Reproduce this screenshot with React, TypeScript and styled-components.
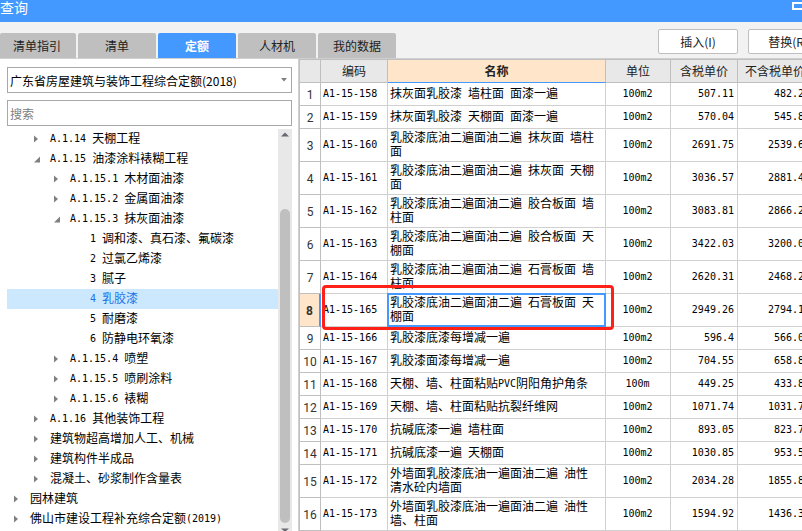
import React, { useState } from 'react';
import styled, { createGlobalStyle, css } from 'styled-components';

const CJK = `'Noto Sans CJK SC', sans-serif`;
const BLUE = '#4399ff';
const LINE = '#d0d0d0';
const EDGE = '#bfbfbf';

const GlobalStyle = createGlobalStyle`
  * { box-sizing: border-box; }
  body { margin: 0; overflow: hidden; }
  body, button, input, select, table { font-family: ${CJK}; font-size: 12px; color: #000; }
`;

const Window = styled.div`
  display: flex;
  flex-direction: column;
  height: 100vh;
  overflow: hidden;
  background: #fff;
`;

const TitleBar = styled.header`
  display: flex;
  flex: none;
  justify-content: space-between;
  align-items: flex-start;
  height: 22px;
  background: ${BLUE};
  color: #fff;
`;

const Title = styled.h1`
  margin: 0;
  font-size: 14px;
  line-height: 15px;
  font-weight: 400;
`;

const WindowButton = styled.button`
  width: 10px;
  height: 12px;
  padding: 0;
  border: 0;
  background: none;
  svg { display: block; }
`;

const Toolbar = styled.div`
  display: flex;
  flex: none;
  align-items: flex-end;
  height: 37px;
  background: #f2f2f2;
  border-bottom: 1px solid ${LINE};
  overflow: hidden;
`;

const Tabs = styled.nav`
  display: flex;
  gap: 2px;
`;

const Tab = styled.button<{ $active: boolean }>`
  width: 78px;
  height: 25px;
  padding: 0;
  border: 0;
  border-radius: 2px 2px 0 0;
  background: ${p => (p.$active ? BLUE : EDGE)};
  color: ${p => (p.$active ? '#fff' : '#222')};
  font-weight: ${p => (p.$active ? 700 : 400)};
  line-height: 24px;
  &:first-child { width: 76px; padding-right: 2px; }
`;

const Actions = styled.div`
  display: flex;
  gap: 10px;
  align-self: flex-start;
  margin: 7px -26px 0 auto;
`;

const ActionButton = styled.button`
  width: 80px;
  height: 25px;
  padding: 0;
  border: 1px solid ${EDGE};
  border-radius: 2px;
  background: #fff;
  color: #222;
  line-height: 23px;
  white-space: nowrap;
`;

const Body = styled.main`
  display: flex;
  flex: 1;
  min-height: 0;
`;

const Sidebar = styled.aside`
  display: flex;
  flex-direction: column;
  flex: none;
  width: 299px;
  padding: 8px 6px 0 7px;
  border-right: 1px solid ${LINE};
`;

const fieldStyle = css`
  display: block;
  width: 100%;
  height: 26px;
  padding: 0 2px;
  border: 1px solid #a8a8a8;
  border-radius: 0;
  background: #fff;
  outline: none;
`;

const SelectWrap = styled.label`
  display: grid;
  grid-template-columns: 1fr 12px;
  align-items: center;
  margin-bottom: 7px;
  > * { grid-row: 1; }
  > select { grid-column: 1 / 3; }
  > svg { grid-column: 2; pointer-events: none; z-index: 1; }
`;

const LibrarySelect = styled.select`
  ${fieldStyle}
  appearance: none;
`;

const SearchBox = styled.input`
  ${fieldStyle}
  flex: none;
  &::placeholder { color: #808080; opacity: 1; }
`;

const TreeArea = styled.div`
  display: flex;
  flex: 1;
  min-height: 0;
  margin-top: 3px;
  overflow: hidden;
`;

const Tree = styled.ul`
  flex: 1;
  margin: 0;
  padding: 0;
  list-style: none;
`;

const TreeRow = styled.li<{ $level: number; $selected: boolean }>`
  display: flex;
  align-items: center;
  height: 20px;
  padding-left: ${p => p.$level * 20 + 6}px;
  background: ${p => (p.$selected ? '#cce8ff' : 'transparent')};
`;

const NodeButton = styled.button<{ $selected: boolean }>`
  display: flex;
  align-items: center;
  height: 20px;
  padding: 0;
  border: 0;
  background: none;
  white-space: pre;
  color: ${p => (p.$selected ? '#1a73e8' : '#000')};
`;

const NodeLabel = styled.span`
  height: 20px;
  line-height: 18px;
`;

const Marker = styled.span`
  display: block;
  width: 17px;
  height: 8px;
  svg { display: block; }
`;

const Mono = styled.span`
  font-family: 'DejaVu Sans Mono', monospace;
  font-size: 10px;
  line-height: 1;
  vertical-align: 1px;
  white-space: pre-wrap;
`;

const ScrollTrack = styled.div`
  display: flex;
  flex-direction: column;
  align-items: center;
  flex: none;
  width: 14px;
  padding-top: 3px;
  background: #e8e8e8;
`;

const ScrollThumb = styled.div`
  flex: 1;
  width: 10px;
  margin: 72px 0 5px;
  border-radius: 5px;
  background: ${EDGE};
`;

const GridPane = styled.section`
  flex: 1;
  min-width: 0;
  overflow: hidden;
  border-left: 1px solid ${EDGE};
  border-top: 1px solid ${EDGE};
`;

const Grid = styled.table`
  width: calc(100% + 11px);
  table-layout: fixed;
  border-collapse: separate;
  border-spacing: 0;
`;

const Col = styled.col<{ $width?: number }>`
  width: ${p => (p.$width ? `${p.$width}px` : 'auto')};
`;

const HeadCell = styled.th<{ $active?: boolean }>`
  height: 23px;
  padding: 0;
  border-right: 1px solid ${EDGE};
  border-bottom: 1px solid ${p => (p.$active ? BLUE : EDGE)};
  background: ${p => (p.$active ? '#ffe6cb' : '#e8e8e8')};
  color: #222;
  font-weight: ${p => (p.$active ? 700 : 400)};
  line-height: 18px;
  white-space: nowrap;
`;

const GridRow = styled.tr<{ $tall: boolean }>`
  height: ${p => (p.$tall ? 33 : 23)}px;
`;

const RowNumber = styled.th<{ $active: boolean }>`
  padding: 2px 0 0;
  border-right: 1px solid ${EDGE};
  border-bottom: 1px solid ${EDGE};
  font-family: Roboto, sans-serif;
  font-size: 12px;
  line-height: 14px;
  font-weight: ${p => (p.$active ? 700 : 400)};
  color: #333;
  ${p => p.$active && css`
    background: #ffe6cb;
    border-right: 2px solid ${BLUE};
  `}
`;

const Cell = styled.td<{ $align?: string }>`
  padding: 0 3px 2px 2px;
  border-right: 1px solid ${LINE};
  border-bottom: 1px solid ${LINE};
  line-height: 14px;
  text-align: ${p => p.$align || 'left'};
`;

const ClippedCell = styled(Cell)`
  padding-right: 8px;
  text-align: right;
`;

const NameCell = styled(Cell)`
  position: relative;
`;

const FocusFrame = styled.span`
  position: absolute;
  inset: -1px;
  border: 2px solid ${BLUE};
  pointer-events: none;
`;

const CalloutFrame = styled.span`
  position: absolute;
  inset: -9px -9px -4px -66px;
  border: 3px solid #ff2018;
  border-radius: 4px;
  pointer-events: none;
  z-index: 2;
`;

/** Sets half-width characters in the fixed-pitch face beside full-width text. */
function Mixed({ text }: { text: string }) {
  return (
    <>
      {text.split(/([\x20-\x7e]+)/).filter(Boolean).map((part, i) =>
        /^[\x20-\x7e]/.test(part) ? <Mono key={i}>{part}</Mono> : part
      )}
    </>
  );
}

type Node = { label: string; level: number; state: 'open' | 'closed' | 'leaf' };

const nodes: Node[] = [
  { label: 'A.1.14 天棚工程', level: 1, state: 'closed' },
  { label: 'A.1.15 油漆涂料裱糊工程', level: 1, state: 'open' },
  { label: 'A.1.15.1 木材面油漆', level: 2, state: 'closed' },
  { label: 'A.1.15.2 金属面油漆', level: 2, state: 'closed' },
  { label: 'A.1.15.3 抹灰面油漆', level: 2, state: 'open' },
  { label: '1 调和漆、真石漆、氟碳漆', level: 3, state: 'leaf' },
  { label: '2 过氯乙烯漆', level: 3, state: 'leaf' },
  { label: '3 腻子', level: 3, state: 'leaf' },
  { label: '4 乳胶漆', level: 3, state: 'leaf' },
  { label: '5 耐磨漆', level: 3, state: 'leaf' },
  { label: '6 防静电环氧漆', level: 3, state: 'leaf' },
  { label: 'A.1.15.4 喷塑', level: 2, state: 'closed' },
  { label: 'A.1.15.5 喷刷涂料', level: 2, state: 'closed' },
  { label: 'A.1.15.6 裱糊', level: 2, state: 'closed' },
  { label: 'A.1.16 其他装饰工程', level: 1, state: 'closed' },
  { label: '建筑物超高增加人工、机械', level: 1, state: 'closed' },
  { label: '建筑构件半成品', level: 1, state: 'closed' },
  { label: '混凝土、砂浆制作含量表', level: 1, state: 'closed' },
  { label: '园林建筑', level: 0, state: 'closed' },
  { label: '佛山市建设工程补充综合定额(2019)', level: 0, state: 'closed' },
];

type Item = [code: string, name: string, unit: string, taxed: string, untaxed: string, tall?: boolean];

const items: Item[] = [
  ['A1-15-158', '抹灰面乳胶漆 墙柱面 面漆一遍', '100m2', '507.11', '482.2'],
  ['A1-15-159', '抹灰面乳胶漆 天棚面 面漆一遍', '100m2', '570.04', '545.8'],
  ['A1-15-160', '乳胶漆底油二遍面油二遍 抹灰面 墙柱面', '100m2', '2691.75', '2539.6', true],
  ['A1-15-161', '乳胶漆底油二遍面油二遍 抹灰面 天棚面', '100m2', '3036.57', '2881.4', true],
  ['A1-15-162', '乳胶漆底油二遍面油二遍 胶合板面 墙柱面', '100m2', '3083.81', '2866.2', true],
  ['A1-15-163', '乳胶漆底油二遍面油二遍 胶合板面 天棚面', '100m2', '3422.03', '3200.0', true],
  ['A1-15-164', '乳胶漆底油二遍面油二遍 石膏板面 墙柱面', '100m2', '2620.31', '2468.2', true],
  ['A1-15-165', '乳胶漆底油二遍面油二遍 石膏板面 天棚面', '100m2', '2949.26', '2794.1', true],
  ['A1-15-166', '乳胶漆底漆每增减一遍', '100m2', '596.4', '566.0'],
  ['A1-15-167', '乳胶漆面漆每增减一遍', '100m2', '704.55', '658.8'],
  ['A1-15-168', '天棚、墙、柱面粘贴PVC阴阳角护角条', '100m', '449.25', '433.8'],
  ['A1-15-169', '天棚、墙、柱面粘贴抗裂纤维网', '100m2', '1071.74', '1031.7'],
  ['A1-15-170', '抗碱底漆一遍 墙柱面', '100m2', '893.05', '823.7'],
  ['A1-15-171', '抗碱底漆一遍 天棚面', '100m2', '1030.85', '953.5'],
  ['A1-15-172', '外墙面乳胶漆底油一遍面油二遍 油性 清水砼内墙面', '100m2', '2034.28', '1855.8', true],
  ['A1-15-173', '外墙面乳胶漆底油一遍面油二遍 油性 墙、柱面', '100m2', '1594.92', '1436.3', true],
];

const tabs = ['清单指引', '清单', '定额', '人材机', '我的数据'];

function StateMarker({ state }: { state: Node['state'] }) {
  return (
    <Marker>
      {state === 'closed' && (
        <svg width="8" height="8" viewBox="0 0 8 8"><path d="M1 0.5L5 4L1 7.5Z" fill="#808080" /></svg>
      )}
      {state === 'open' && (
        <svg width="8" height="8" viewBox="0 0 8 8"><path d="M7 1.5V7.5H1Z" fill="#808080" /></svg>
      )}
    </Marker>
  );
}

export default function App() {
  const [tab, setTab] = useState('定额');
  const [selected, setSelected] = useState('4 乳胶漆');
  const activeRow = 7;

  return (
    <Window>
      <GlobalStyle />
      <TitleBar>
        <Title>查询</Title>
        <WindowButton aria-label="最大化">
          <svg width="10" height="12" viewBox="0 0 10 12">
            <rect x="1" y="3" width="12" height="6" fill="none" stroke="#fff" strokeWidth="2" />
          </svg>
        </WindowButton>
      </TitleBar>
      <Toolbar>
        <Tabs>
          {tabs.map(t => (
            <Tab key={t} $active={t === tab} onClick={() => setTab(t)}>{t}</Tab>
          ))}
        </Tabs>
        <Actions>
          <ActionButton>插入(I)</ActionButton>
          <ActionButton>替换(R)</ActionButton>
        </Actions>
      </Toolbar>
      <Body>
        <Sidebar>
          <SelectWrap>
            <LibrarySelect aria-label="定额库">
              <option>广东省房屋建筑与装饰工程综合定额(2018)</option>
            </LibrarySelect>
            <svg width="8" height="4" viewBox="0 0 8 4"><path d="M1 0H7L4 3.5Z" fill="#808080" /></svg>
          </SelectWrap>
          <SearchBox type="text" placeholder="搜索" aria-label="搜索" />
          <TreeArea>
            <Tree>
              {nodes.map(n => (
                <TreeRow key={n.label} $level={n.level} $selected={n.label === selected}>
                  <NodeButton $selected={n.label === selected} onClick={() => setSelected(n.label)}>
                    <StateMarker state={n.state} />
                    <NodeLabel><Mixed text={n.label} /></NodeLabel>
                  </NodeButton>
                </TreeRow>
              ))}
            </Tree>
            <ScrollTrack>
              <svg width="8" height="5" viewBox="0 0 8 5"><path d="M0 4.5L4 0.5L8 4.5Z" fill="#686870" /></svg>
              <ScrollThumb />
              <svg width="8" height="3" viewBox="0 0 8 3"><path d="M0 0.5H8L5 3H3Z" fill="#686870" /></svg>
            </ScrollTrack>
          </TreeArea>
        </Sidebar>
        <GridPane>
          <Grid>
            <colgroup>
              <Col $width={21} />
              <Col $width={67} />
              <Col />
              <Col $width={65} />
              <Col $width={67} />
              <Col $width={75} />
            </colgroup>
            <thead>
              <tr>
                <HeadCell />
                <HeadCell>编码</HeadCell>
                <HeadCell $active>名称</HeadCell>
                <HeadCell>单位</HeadCell>
                <HeadCell>含税单价</HeadCell>
                <HeadCell>不含税单价</HeadCell>
              </tr>
            </thead>
            <tbody>
              {items.map(([code, name, unit, taxed, untaxed, tall], i) => (
                <GridRow key={code} $tall={!!tall}>
                  <RowNumber scope="row" $active={i === activeRow}>{i + 1}</RowNumber>
                  <Cell><Mono>{code}</Mono></Cell>
                  <NameCell>
                    <Mixed text={name} />
                    {i === activeRow && <FocusFrame />}
                    {i === activeRow && <CalloutFrame />}
                  </NameCell>
                  <Cell $align="center"><Mono>{unit}</Mono></Cell>
                  <Cell $align="right"><Mono>{taxed}</Mono></Cell>
                  <ClippedCell><Mono>{untaxed}</Mono></ClippedCell>
                </GridRow>
              ))}
            </tbody>
          </Grid>
        </GridPane>
      </Body>
    </Window>
  );
}
